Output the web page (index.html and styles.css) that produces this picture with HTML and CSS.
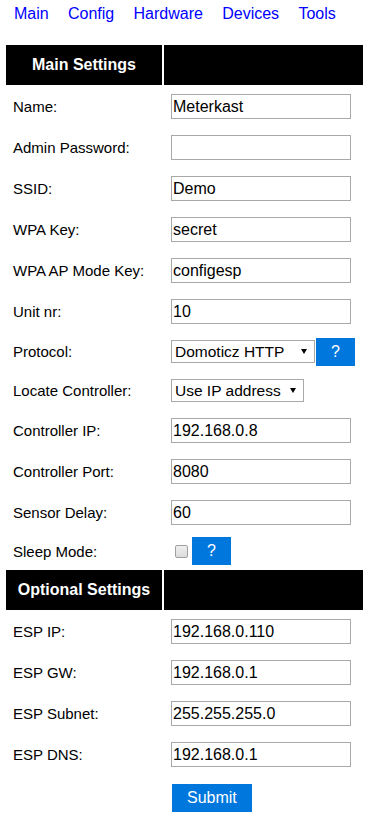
FILE: index.html
```html
<!DOCTYPE html>
<html>
<head>
<meta charset="utf-8">
<title>ESP Easy</title>
<link rel="stylesheet" href="styles.css">
</head>
<body>
<nav class="nav">
  <a href="#">Main</a>
  <a href="#">Config</a>
  <a href="#">Hardware</a>
  <a href="#">Devices</a>
  <a href="#">Tools</a>
</nav>
<form>
<table class="cfg">
  <colgroup><col class="c1"><col class="c2"></colgroup>
  <tr class="head"><th>Main Settings</th><th></th></tr>
  <tr class="row"><td>Name:</td><td><input class="txt" type="text" value="Meterkast"></td></tr>
  <tr class="row"><td>Admin Password:</td><td><input class="txt" type="password" value=""></td></tr>
  <tr class="row"><td>SSID:</td><td><input class="txt" type="text" value="Demo"></td></tr>
  <tr class="row"><td>WPA Key:</td><td><input class="txt" type="text" value="secret"></td></tr>
  <tr class="row"><td>WPA AP Mode Key:</td><td><input class="txt" type="text" value="configesp"></td></tr>
  <tr class="row"><td>Unit nr:</td><td><input class="txt" type="text" value="10"></td></tr>
  <tr class="row sel"><td>Protocol:</td><td><div class="ctl"><span class="select w144"><select><option>Domoticz HTTP</option></select><span class="arrow"></span></span><a class="btn" href="#">?</a></div></td></tr>
  <tr class="row sel"><td>Locate Controller:</td><td><div class="ctl"><span class="select w133"><select><option>Use IP address</option></select><span class="arrow"></span></span></div></td></tr>
  <tr class="row"><td>Controller IP:</td><td><input class="txt" type="text" value="192.168.0.8"></td></tr>
  <tr class="row"><td>Controller Port:</td><td><input class="txt" type="text" value="8080"></td></tr>
  <tr class="row"><td>Sensor Delay:</td><td><input class="txt" type="text" value="60"></td></tr>
  <tr class="row slp"><td>Sleep Mode:</td><td><div class="ctl"><input class="chk" type="checkbox"><a class="btn" href="#">?</a></div></td></tr>
  <tr class="head"><th>Optional Settings</th><th></th></tr>
  <tr class="row"><td>ESP IP:</td><td><input class="txt" type="text" value="192.168.0.110"></td></tr>
  <tr class="row"><td>ESP GW:</td><td><input class="txt" type="text" value="192.168.0.1"></td></tr>
  <tr class="row"><td>ESP Subnet:</td><td><input class="txt" type="text" value="255.255.255.0"></td></tr>
  <tr class="row"><td>ESP DNS:</td><td><input class="txt" type="text" value="192.168.0.1"></td></tr>
  <tr class="sub"><td></td><td><button class="btn" type="button">Submit</button></td></tr>
</table>
</form>
</body>
</html>
```
FILE: styles.css
```css
html, body {
  background: #fff;
}
body {
  margin: 4px;
  font-family: "Liberation Sans", Arial, sans-serif;
  color: #000;
}
.nav {
  display: flex;
  gap: 19.3px;
  height: 38px;
  padding: 1px 0 0 10px;
  font-size: 16px;
  line-height: 18px;
}
.nav a {
  color: #0000ff;
  text-decoration: none;
}
form {
  margin: 0;
}
.cfg {
  border-collapse: separate;
  border-spacing: 2px;
  table-layout: fixed;
  width: 361px;
  font-size: 15px;
}
.c1 { width: 156px; }
.c2 { width: 199px; }
.head th {
  height: 40px;
  padding: 0;
  background: #000;
  color: #fff;
  font-size: 16px;
  font-weight: bold;
  text-align: center;
  vertical-align: middle;
}
.row td {
  height: 39px;
  padding: 0 7px;
  vertical-align: middle;
  white-space: nowrap;
}
.row.sel td { height: 37px; }
.row.slp td { height: 34px; }
.sub td {
  padding: 7px 7px 0 7px;
  vertical-align: top;
}
.txt {
  box-sizing: border-box;
  width: 180px;
  height: 25px;
  margin: 0;
  padding: 0 1px;
  border: 1px solid #a9a9a9;
  border-radius: 0;
  font: 16px "Liberation Sans", Arial, sans-serif;
  color: #000;
  background: #fff;
  outline: none;
}
.ctl {
  display: flex;
  align-items: center;
}
.select {
  box-sizing: border-box;
  display: inline-flex;
  align-items: center;
  height: 23px;
  border: 1px solid #a9a9a9;
  background: #fff;
  padding: 0 7px 0 3px;
}
.w144 { width: 144px; }
.w133 { width: 133px; }
.select select {
  appearance: none;
  -webkit-appearance: none;
  flex: 1;
  min-width: 0;
  border: 0;
  padding: 0;
  margin: 0;
  background: transparent;
  font: 15.5px "Liberation Sans", Arial, sans-serif;
  color: #000;
  outline: none;
}
.arrow {
  width: 0;
  height: 0;
  border-left: 3px solid transparent;
  border-right: 3px solid transparent;
  border-top: 5px solid #000;
}
.btn {
  display: inline-block;
  padding: 5px 15px;
  border: 1px solid #fff;
  background: #0077dd;
  color: #fff;
  font: 16px "Liberation Sans", Arial, sans-serif;
  line-height: normal;
  text-decoration: none;
  border-radius: 0;
  margin: 0;
  cursor: pointer;
}
.chk {
  appearance: none;
  -webkit-appearance: none;
  box-sizing: border-box;
  width: 13px;
  height: 13px;
  margin: 3px 3px 3px 4px;
  border: 1px solid #a0a0a0;
  border-radius: 2px;
  background: linear-gradient(#efefef, #dcdcdc);
}
```
